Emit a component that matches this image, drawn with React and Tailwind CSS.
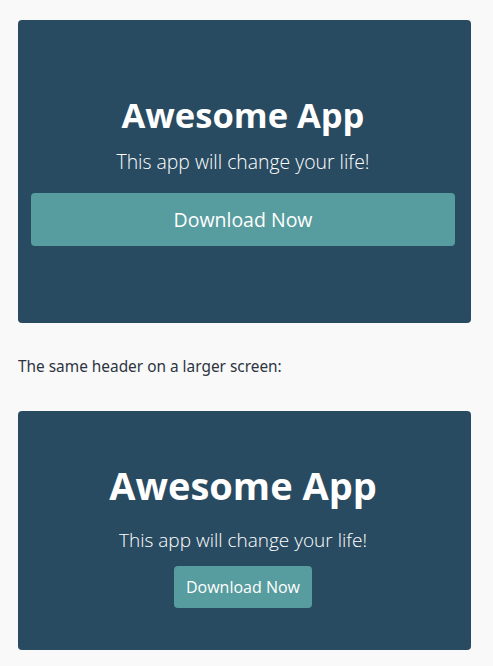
import React from "react";

const Hero = ({ large }) => (
  <header
    className={
      large
        ? "bg-[#294b61] rounded-[4px] flex flex-col items-center text-center text-white pt-[50px] pb-[42px] pl-[13px] pr-[16px]"
        : "bg-[#294b61] rounded-[4px] flex flex-col items-center text-center text-white pt-[73px] pb-[77px] pl-[13px] pr-[16px]"
    }
    style={{ fontFamily: '"Open Sans", sans-serif' }}
  >
    <h1 className={large ? "text-[38px] leading-[48px] font-bold" : "text-[34.5px] leading-[44px] font-bold"}>
      Awesome App
    </h1>
    <p className={large ? "text-[19px] leading-[26px] font-light mt-[18px]" : "text-[19.4px] leading-[28px] font-light mt-[11px]"}>
      This app will change your life!
    </p>
    <button
      className={
        large
          ? "bg-[#579c9e] rounded-[4px] text-white text-[16px] h-[42px] px-[12px] mt-[13px]"
          : "bg-[#579c9e] rounded-[4px] text-white text-[19.5px] h-[53px] w-full mt-[17px]"
      }
    >
      Download Now
    </button>
  </header>
);

export default function App() {
  return (
    <div className="min-h-screen bg-[#f9f9f9] pl-[18px] pr-[22px] pt-[20px] pb-4">
      <Hero />
      <p
        className="text-[15.4px] text-[#2d3441] mt-[32px] mb-[33px]"
        style={{ fontFamily: '"Noto Sans", sans-serif' }}
      >
        The same header on a larger screen:
      </p>
      <Hero large />
    </div>
  );
}
